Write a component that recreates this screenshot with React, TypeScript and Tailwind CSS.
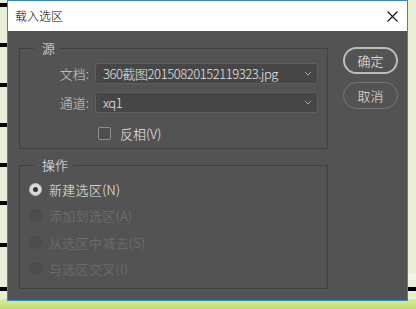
import React from "react";

const FONT = { fontFamily: '"Noto Sans CJK SC", "Noto Sans", sans-serif' };

const DASHES = [3, 43, 83, 123, 163, 201, 243, 287];

function Chevron() {
  return (
    <svg width="8" height="5" viewBox="0 0 8 5" className="shrink-0">
      <polyline points="1,1 4,4 7,1" fill="none" stroke="#a8a8a8" strokeWidth="1" />
    </svg>
  );
}

function Select({ value }: { value: string }) {
  return (
    <div className="w-[223px] h-[21px] rounded-[3px] border border-[#5f5f5f] bg-[#464646] flex items-center justify-between pl-[7px] pr-[5px]">
      <span className="text-[13px] leading-[19px] tracking-[-0.45px] font-light text-[#e4e4e4] whitespace-nowrap">{value}</span>
      <Chevron />
    </div>
  );
}

function Field({ label, value }: { label: string; value: string }) {
  return (
    <div className="flex items-center">
      <span className="w-[69px] text-right text-[13px] leading-[19px] font-light text-[#cfcfcf]">{label}</span>
      <div className="ml-[6px]">
        <Select value={value} />
      </div>
    </div>
  );
}

function Radio({ label, checked, disabled }: { label: string; checked?: boolean; disabled?: boolean }) {
  return (
    <div className="h-[26.5px] flex items-center pl-[9px] gap-[7px]">
      {checked ? (
        <span className="w-[13px] h-[13px] rounded-full bg-[#dadada] border border-[#bdbdbd] flex items-center justify-center">
          <span className="w-[5px] h-[5px] rounded-full bg-[#363636]" />
        </span>
      ) : (
        <span className="w-[13px] h-[13px] rounded-full bg-[#4d4d4d] border border-[#4a4a4a]" />
      )}
      <span className={`text-[13px] leading-[19px] font-light tracking-[0.3px] ${disabled ? "text-[#747474]" : "text-[#ececec]"}`}>{label}</span>
    </div>
  );
}

export default function App() {
  return (
    <div className="relative w-[416px] h-[309px] overflow-hidden bg-[#ebeed8]" style={FONT}>
      {/* backdrop behind the dialog */}
      <div className="absolute left-0 right-0 bottom-0 h-[10px] bg-gradient-to-b from-[#d9eca2] to-[#c2dc6c]" />
      <div className="absolute right-0 top-[273px] w-[9px] h-[7px] bg-[#f4f5ea]" />
      <div className="absolute right-0 top-[287px] w-[9px] h-[4px] bg-black" />
      {DASHES.map((y) => (
        <div key={y} className="absolute left-0 w-[7px] h-[4px] bg-black" style={{ top: y }} />
      ))}

      <div className="relative ml-[7px] w-[401px] h-[301px] border border-[#2b88d8] flex flex-col">
        <div className="h-[30px] bg-white flex items-center justify-between pl-[7px] pr-[9px]">
          <span className="text-[12px] leading-[16px] font-light text-black">载入选区</span>
          <svg width="11" height="11" viewBox="0 0 11 11">
            <path d="M0.5 0.5 L10.5 10.5 M10.5 0.5 L0.5 10.5" stroke="#111" strokeWidth="1.1" />
          </svg>
        </div>

        <div className="flex-1 bg-[#535353] flex pl-[11px] pr-[9px]">
          <div className="w-[309px] flex flex-col">
            <fieldset className="mt-[8px] h-[110px] border border-[#414141]">
              <legend className="ml-[14px] pl-[8px] pr-[5px] text-[13px] leading-[18px] font-light text-[#ececec]">源</legend>
              <div className="pt-[6px] flex flex-col gap-[8px]">
                <Field label="文档:" value="360截图20150820152119323.jpg" />
                <Field label="通道:" value="xq1" />
                <div className="flex items-center pl-[78px] gap-[9px] mt-[3px]">
                  <span className="w-[13px] h-[13px] rounded-[2px] border border-[#8e8e8e] bg-[#4e4e4e]" />
                  <span className="text-[13px] leading-[19px] font-light text-[#e6e6e6]">反相(V)</span>
                </div>
              </div>
            </fieldset>

            <fieldset className="mt-[7px] h-[133px] border border-[#414141]">
              <legend className="ml-[14px] pl-[8px] pr-[5px] text-[13px] leading-[18px] font-light text-[#ececec]">操作</legend>
              <div className="pt-[2px] flex flex-col">
                <Radio label="新建选区(N)" checked />
                <Radio label="添加到选区(A)" disabled />
                <Radio label="从选区中减去(S)" disabled />
                <Radio label="与选区交叉(I)" disabled />
              </div>
            </fieldset>
          </div>

          <div className="ml-[15px] mt-[16px] flex flex-col gap-[8px]">
            <button className="w-[55px] h-[27px] rounded-full border-2 border-[#bcbcbc] text-[13px] leading-[19px] font-light text-[#f2f2f2]">
              确定
            </button>
            <button className="w-[55px] h-[27px] rounded-full border border-[#777777] text-[13px] leading-[19px] font-light text-[#e6e6e6]">
              取消
            </button>
          </div>
        </div>
      </div>
    </div>
  );
}
